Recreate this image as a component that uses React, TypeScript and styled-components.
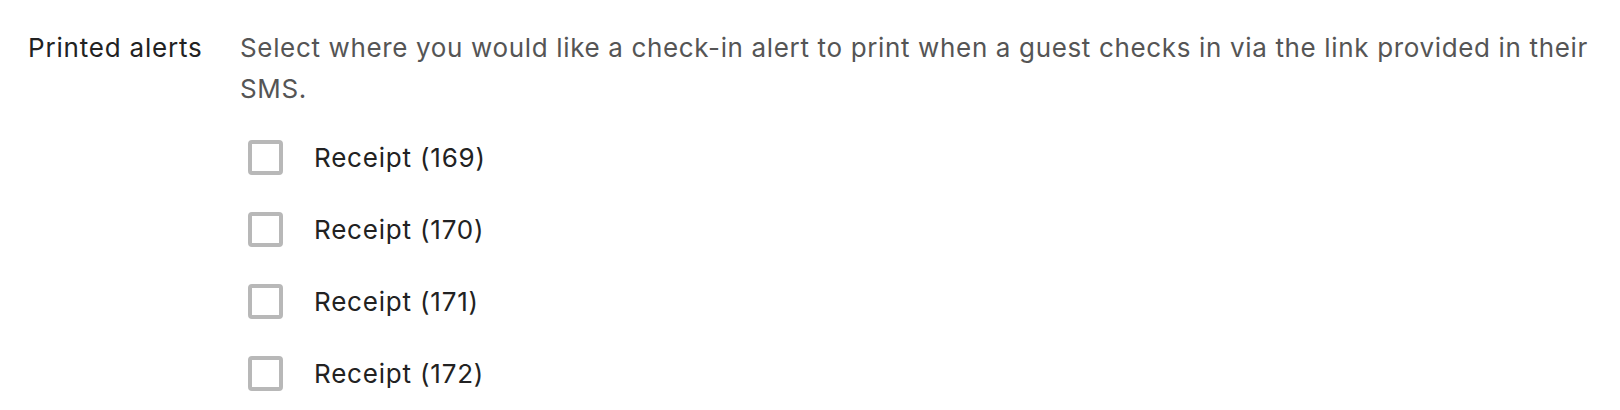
import styled, { createGlobalStyle } from 'styled-components';

const GlobalStyle = createGlobalStyle`
  body {
    margin: 0;
    background: #fff;
    font-family: Inter, "Liberation Sans", sans-serif;
    -webkit-font-smoothing: antialiased;
  }
`;

const Section = styled.section`
  display: grid;
  grid-template-columns: 212px 1fr;
  padding: 27px 10px 0 28px;
`;

const Label = styled.div`
  font-size: 26px;
  line-height: 41px;
  letter-spacing: 0.8px;
  color: #222;
`;

const Body = styled.div`
  display: flex;
  flex-direction: column;
`;

const Description = styled.p`
  margin: 0 0 31px;
  font-size: 26px;
  line-height: 41px;
  letter-spacing: 0.65px;
  color: #555;
`;

const OptionList = styled.ul`
  list-style: none;
  margin: 0;
  padding: 0 0 0 8px;
  display: flex;
  flex-direction: column;
  gap: 37px;
`;

const Option = styled.li`
  display: flex;
  align-items: center;
  gap: 31px;
  height: 35px;
`;

const Box = styled.span`
  flex: none;
  width: 35px;
  height: 35px;
  box-sizing: border-box;
  border: 4px solid #b8b8b8;
  border-radius: 4px;
  background: #fff;
`;

const OptionText = styled.span`
  font-size: 26px;
  letter-spacing: 0.8px;
  color: #222;
`;

const receipts = [169, 170, 171, 172];

function App() {
  return (
    <>
      <GlobalStyle />
      <Section>
        <Label>Printed alerts</Label>
        <Body>
          <Description>
            Select where you would like a check-in alert to print when a guest checks in via the link provided in their SMS.
          </Description>
          <OptionList>
            {receipts.map((n) => (
              <Option key={n}>
                <Box />
                <OptionText>Receipt ({n})</OptionText>
              </Option>
            ))}
          </OptionList>
        </Body>
      </Section>
    </>
  );
}

export default App;
